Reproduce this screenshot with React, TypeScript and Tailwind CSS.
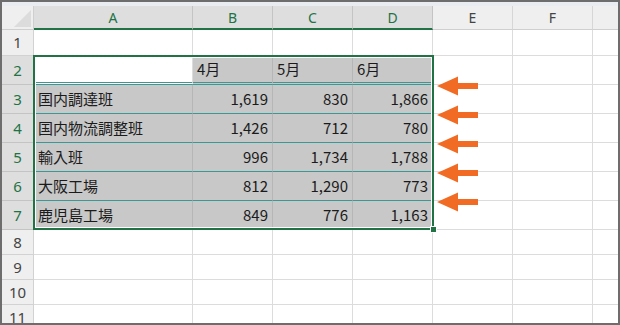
import React from "react";

type Row = {
  num: number;
  h: string;
  cells?: [string, string, string, string];
};

const rows: Row[] = [
  { num: 1, h: "h-[26px]" },
  { num: 2, h: "h-[29px]", cells: ["", "4月", "5月", "6月"] },
  { num: 3, h: "h-[29px]", cells: ["国内調達班", "1,619", "830", "1,866"] },
  { num: 4, h: "h-[29px]", cells: ["国内物流調整班", "1,426", "712", "780"] },
  { num: 5, h: "h-[29px]", cells: ["輸入班", "996", "1,734", "1,788"] },
  { num: 6, h: "h-[29px]", cells: ["大阪工場", "812", "1,290", "773"] },
  { num: 7, h: "h-[29px]", cells: ["鹿児島工場", "849", "776", "1,163"] },
  { num: 8, h: "h-[25px]" },
  { num: 9, h: "h-[25px]" },
  { num: 10, h: "h-[25px]" },
  { num: 11, h: "h-[25px]" },
];

const colW = ["w-[159px]", "w-[80px]", "w-[80px]", "w-[80px]"];
const arrowTops = ["top-[74px]", "top-[103px]", "top-[132px]", "top-[161px]", "top-[190px]"];

function Arrow({ top }: { top: string }) {
  return (
    <svg className={`absolute left-[435px] ${top}`} width="41" height="20" viewBox="0 0 41 20">
      <polygon points="0,10 21,0.5 21,7 41,7 41,13 21,13 21,19.5" fill="#f26b24" />
    </svg>
  );
}

function DataCell({ i, text, row }: { i: number; text: string; row: Row }) {
  const inSel = !!row.cells;
  const active = row.num === 2 && i === 0;
  const numeric = row.num > 2 && i > 0;
  const bottom =
    row.num === 2
      ? "border-b-[3px] border-double border-b-[#3a9994]"
      : row.num < 7
      ? "border-b border-b-[#3a9994]"
      : "border-b border-b-[#dcdcdc]";
  return (
    <div
      className={`${colW[i]} shrink-0 h-full flex items-center border-r ${bottom} ${
        inSel ? (active ? "bg-white border-r-[#dcdcdc]" : "bg-[#c8c8c8] border-r-[#b6b6b6]") : ""
      } ${numeric ? "justify-end pr-[4px]" : "pl-[4px]"} text-[15px] text-[#1b1b1b] whitespace-nowrap`}
    >
      {text}
    </div>
  );
}

export default function App() {
  return (
    <div className="relative w-[620px] h-[325px] overflow-hidden border-2 border-[#6d6d6d] bg-white font-['Noto_Sans_CJK_JP',sans-serif]">
      {/* strip above headers */}
      <div className="h-[4px] bg-[#e9ecf1]" />

      {/* column headers */}
      <div className="flex h-[24px] font-['Noto_Sans',sans-serif] text-[14px]">
        <div className="relative w-[32px] shrink-0 bg-[#efefef] border-r border-b border-[#cfcfcf]">
          <svg className="absolute right-[2px] bottom-[2px]" width="17" height="17" viewBox="0 0 17 17">
            <polygon points="17,0 17,17 0,17" fill="#dcdcdc" />
          </svg>
        </div>
        {["A", "B", "C", "D"].map((c, i) => (
          <div
            key={c}
            className={`${colW[i]} shrink-0 flex items-center justify-center bg-[#dedede] text-[#217346] border-r border-r-[#c4c4c4] border-b-2 border-b-[#217346]`}
          >
            {c}
          </div>
        ))}
        {["E", "F"].map((c) => (
          <div
            key={c}
            className="w-[80px] shrink-0 flex items-center justify-center bg-[#efefef] text-[#444] border-r border-r-[#d6d6d6] border-b border-b-[#cfcfcf]"
          >
            {c}
          </div>
        ))}
        <div className="flex-1 bg-[#efefef] border-b border-[#cfcfcf]" />
      </div>

      {/* grid rows */}
      {rows.map((row) => {
        const sel = !!row.cells;
        return (
          <div key={row.num} className={`flex ${row.h}`}>
            <div
              className={`w-[32px] shrink-0 flex items-center justify-center border-r border-b font-['Noto_Sans',sans-serif] text-[15px] ${
                sel
                  ? "bg-[#dedede] text-[#217346] border-r-[#217346] border-b-[#c4c4c4]"
                  : "bg-[#efefef] text-[#444] border-[#d2d2d2]"
              }`}
            >
              {row.num}
            </div>
            {row.cells ? (
              row.cells.map((t, i) => <DataCell key={i} i={i} text={t} row={row} />)
            ) : (
              colW.map((w, i) => (
                <div key={i} className={`${w} shrink-0 h-full border-r border-b border-[#dcdcdc]`} />
              ))
            )}
            <div className="w-[80px] shrink-0 h-full border-r border-b border-[#dcdcdc]" />
            <div className="w-[80px] shrink-0 h-full border-r border-b border-[#dcdcdc]" />
            <div className="flex-1 h-full border-b border-[#dcdcdc]" />
          </div>
        );
      })}

      {/* selection box */}
      <div className="absolute left-[31px] top-[53px] w-[401px] h-[175px] border-2 border-[#217346] shadow-[inset_0_0_0_1px_#ffffff]" />
      <div className="absolute left-[428px] top-[224px] w-[7px] h-[7px] bg-[#217346] border border-white" />

      {arrowTops.map((t) => (
        <Arrow key={t} top={t} />
      ))}
    </div>
  );
}
